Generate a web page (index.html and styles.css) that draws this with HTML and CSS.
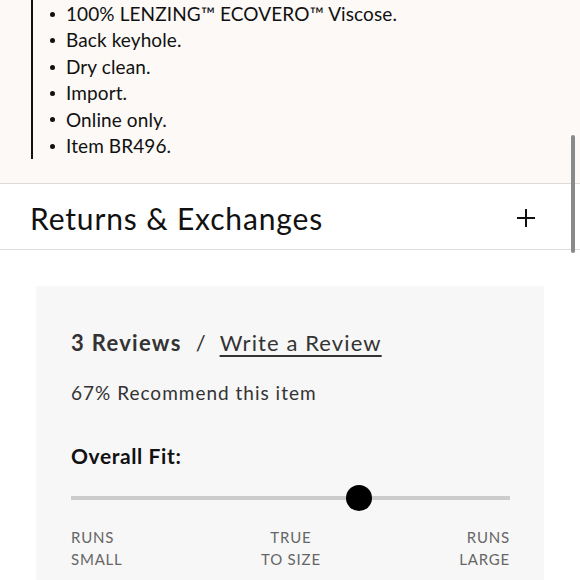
FILE: index.html
```html
<!DOCTYPE html>
<html lang="en">
<head>
<meta charset="utf-8">
<title>Product details</title>
<link rel="stylesheet" href="styles.css">
</head>
<body>
<section class="details">
  <ul class="features">
    <li>100% LENZING™ ECOVERO™ Viscose.</li>
    <li>Back keyhole.</li>
    <li>Dry clean.</li>
    <li>Import.</li>
    <li>Online only.</li>
    <li>Item BR496.</li>
  </ul>
</section>
<section class="accordion">
  <h2 class="accordion-title">Returns &amp; Exchanges</h2>
  <svg class="plus" width="20" height="20" viewBox="0 0 20 20" aria-hidden="true">
    <path d="M10 1v18M1 10h18" stroke="#111" stroke-width="2" fill="none"/>
  </svg>
</section>
<section class="reviews">
  <div class="rev-head">
    <span class="rev-count">3 Reviews</span>
    <span class="rev-sep">/</span>
    <a class="rev-write" href="#">Write a Review</a>
  </div>
  <p class="recommend">67% Recommend this item</p>
  <h3 class="fit-title">Overall Fit:</h3>
  <div class="slider">
    <div class="track"></div>
    <div class="thumb" style="left: 65.5%"></div>
  </div>
  <div class="fit-labels">
    <span class="lbl lbl-left">RUNS<br>SMALL</span>
    <span class="lbl lbl-mid">TRUE<br>TO SIZE</span>
    <span class="lbl lbl-right">RUNS<br>LARGE</span>
  </div>
</section>
<div class="scrollbar"></div>
</body>
</html>
```
FILE: styles.css
```css
html, body {
  margin: 0;
  padding: 0;
  background: #ffffff;
  font-family: "Lato", "Noto Sans", sans-serif;
  color: #111;
  height: 580px;
  overflow: hidden;
}

.details {
  background: #fcf9f6;
  padding: 0 0 24px 31px;
  border-bottom: 1px solid #dddbd9;
}

.features {
  list-style: none;
  margin: 0;
  padding: 1px 0 0 0;
  border-left: 2px solid #111;
  font-size: 19px;
  line-height: 26.4px;
  color: #111;
  letter-spacing: 0.1px;
}

.features li {
  display: flex;
  align-items: center;
}

.features li::before {
  content: "";
  width: 5px;
  height: 5px;
  border-radius: 50%;
  background: #111;
  margin-left: 17px;
  margin-right: 11px;
  flex: none;
}

.accordion {
  display: flex;
  align-items: center;
  justify-content: space-between;
  height: 66px;
  padding: 2px 44px 0 30px;
  box-sizing: border-box;
  border-bottom: 1px solid #dddddd;
}

.accordion-title {
  margin: 0;
  font-size: 30px;
  font-weight: 400;
  letter-spacing: 0.85px;
  color: #111;
}

.plus {
  display: block;
}

.reviews {
  margin: 36px 36px 0 36px;
  background: #f7f7f7;
  padding: 42px 34px 30px 35px;
  color: #333;
}

.rev-head {
  font-size: 22px;
  line-height: 30px;
  display: flex;
  align-items: baseline;
}

.rev-count {
  font-weight: 700;
  letter-spacing: 1.3px;
  color: #333;
}

.rev-sep {
  margin: 0 14px 0 14px;
  color: #333;
}

.rev-write {
  color: #333;
  letter-spacing: 1.1px;
  text-decoration: underline;
  text-underline-offset: 4px;
  text-decoration-thickness: 1.5px;
}

.recommend {
  margin: 22px 0 0 0;
  font-size: 19px;
  line-height: 26px;
  letter-spacing: 1px;
  color: #333;
}

.fit-title {
  margin: 36px 0 0 0;
  font-size: 21px;
  line-height: 28px;
  font-weight: 700;
  letter-spacing: 0.6px;
  color: #111;
}

.slider {
  position: relative;
  height: 26px;
  margin-top: 15px;
  display: flex;
  align-items: center;
}

.track {
  flex: 1;
  height: 4px;
  background: #cccccc;
}

.thumb {
  position: absolute;
  top: 0;
  width: 26px;
  height: 26px;
  border-radius: 50%;
  background: #000;
  transform: translateX(-50%);
}

.fit-labels {
  display: flex;
  justify-content: space-between;
  margin-top: 15px;
  font-size: 15px;
  line-height: 22px;
  letter-spacing: 0.8px;
  color: #666;
}

.lbl-mid {
  text-align: center;
}

.lbl-right {
  text-align: right;
}

.scrollbar {
  position: fixed;
  left: 571px;
  top: 135px;
  width: 4px;
  height: 118px;
  border-radius: 2px;
  background: #8a8a8a;
}
```
